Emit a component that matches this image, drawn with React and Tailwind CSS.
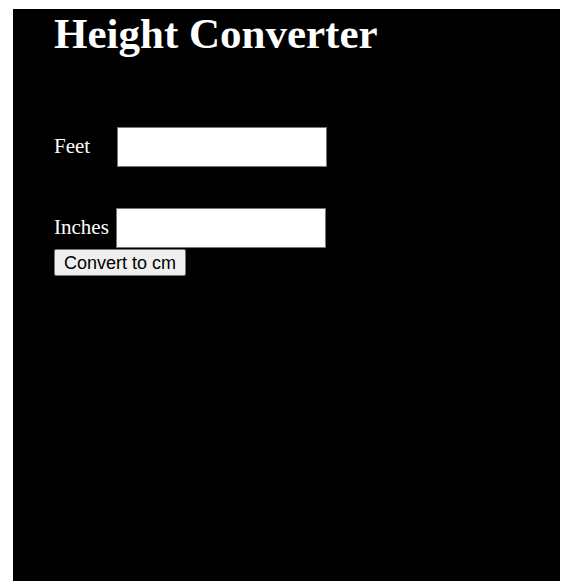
import React from 'react';

const App = () => {
  return (
    <div className="w-[570px] h-[586px] bg-white pt-[9px] pl-[13px]">
      <div
        className="w-[547px] h-[572px] bg-black text-white pl-[41px]"
        style={{ fontFamily: '"Liberation Serif", "Times New Roman", serif' }}
      >
        {/* Title */}
        <h1 className="text-[43px] font-bold leading-[normal] m-0">Height Converter</h1>

        {/* Form */}
        <div className="mt-[69px] flex flex-col">
          <div className="flex items-center">
            <label className="text-[21px] w-[63px]">Feet</label>
            <input className="w-[210px] h-[40px] bg-white border border-[#767676] text-black" />
          </div>
          <div className="flex items-center mt-[41px]">
            <label className="text-[21px] mr-[7px]">Inches</label>
            <input className="w-[210px] h-[40px] bg-white border border-[#767676] text-black" />
          </div>
          <div className="mt-px">
            <button
              className="h-[27px] px-[9px] text-[18px] leading-none text-black bg-[#efefef] border border-[#767676] rounded-[2px]"
              style={{ fontFamily: '"Liberation Sans", Arial, sans-serif' }}
            >
              Convert to cm
            </button>
          </div>
        </div>
      </div>
    </div>
  );
};

export default App;
